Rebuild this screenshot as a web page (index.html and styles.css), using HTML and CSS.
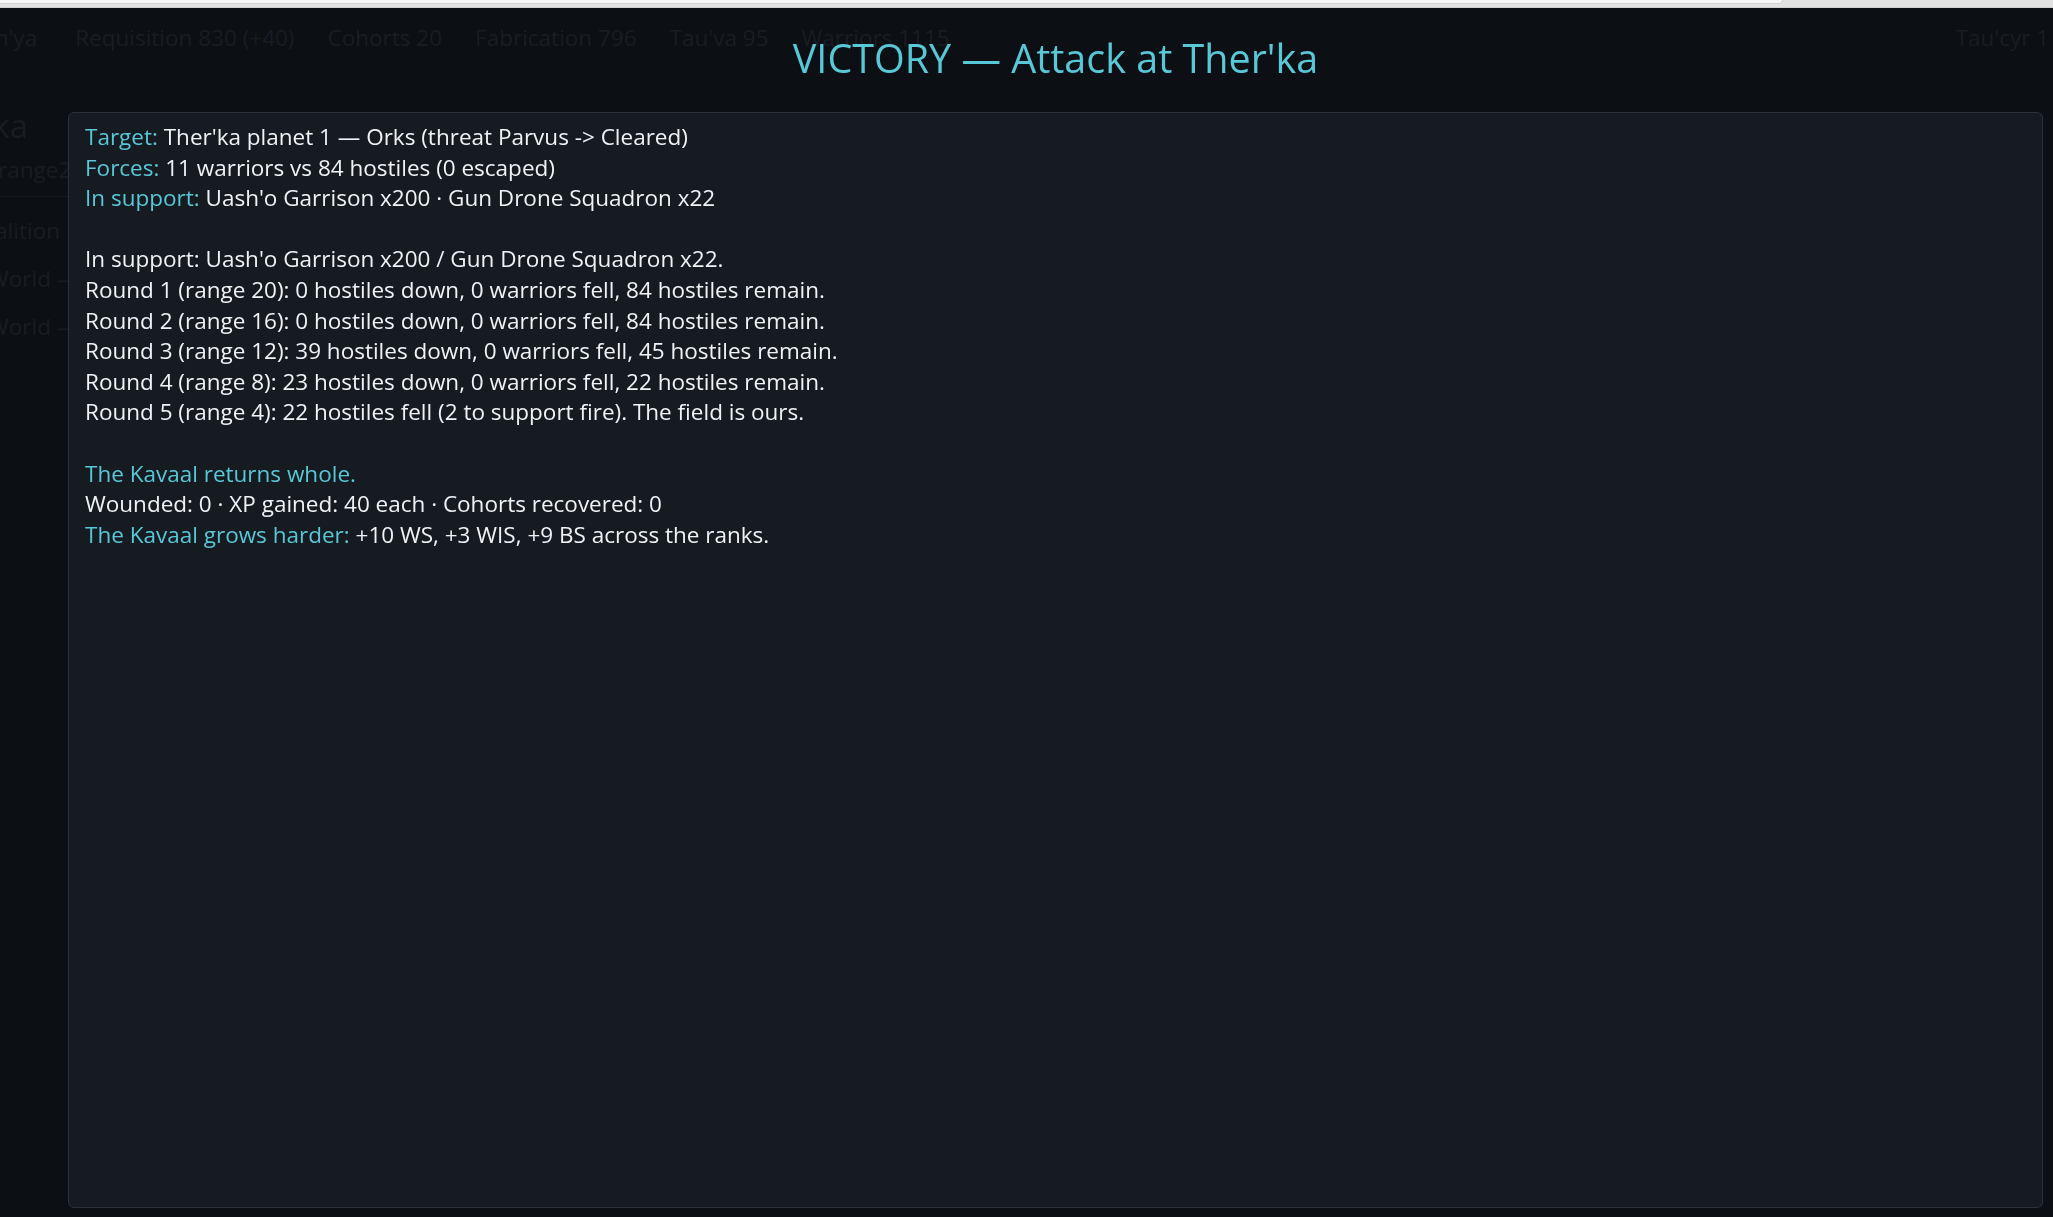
FILE: index.html
```html
<!DOCTYPE html>
<html lang="en">
<head>
<meta charset="utf-8">
<title>VICTORY — Attack at Ther'ka</title>
<link rel="stylesheet" href="styles.css">
</head>
<body>
<div class="scrollbar"><div class="thumb"></div></div>
<div class="page">
  <header class="topbar">
    <div class="stats">
      <span class="stat first">Vash'ya</span>
      <span class="stat">Requisition 830 (+40)</span>
      <span class="stat">Cohorts 20</span>
      <span class="stat">Fabrication 796</span>
      <span class="stat">Tau'va 95</span>
      <span class="stat">Warriors 1115</span>
    </div>
    <span class="stat last">Tau'cyr 1 ·</span>
  </header>
  <aside class="side">
    <div class="side-row side-title"><span>Ther'ka</span></div>
    <div class="side-row side-sub"><span>range20 hostiles</span></div>
    <div class="side-rule"></div>
    <div class="side-row side-co"><span>Tau coalition</span></div>
    <div class="side-row side-world"><span>World — Ther'ka</span></div>
    <div class="side-row side-world"><span>World — Vior'la</span></div>
  </aside>
</div>

<div class="overlay">
  <h1 class="title">VICTORY — Attack at Ther'ka</h1>
  <div class="panel">
    <div class="block">
      <div class="line"><span class="label">Target:</span> Ther'ka planet 1 — Orks (threat Parvus -&gt; Cleared)</div>
      <div class="line"><span class="label">Forces:</span> 11 warriors vs 84 hostiles (0 escaped)</div>
      <div class="line"><span class="label">In support:</span> Uash'o Garrison x200 · Gun Drone Squadron x22</div>
    </div>
    <div class="block">
      <div class="line">In support: Uash'o Garrison x200 / Gun Drone Squadron x22.</div>
      <div class="line">Round 1 (range 20): 0 hostiles down, 0 warriors fell, 84 hostiles remain.</div>
      <div class="line">Round 2 (range 16): 0 hostiles down, 0 warriors fell, 84 hostiles remain.</div>
      <div class="line">Round 3 (range 12): 39 hostiles down, 0 warriors fell, 45 hostiles remain.</div>
      <div class="line">Round 4 (range 8): 23 hostiles down, 0 warriors fell, 22 hostiles remain.</div>
      <div class="line">Round 5 (range 4): 22 hostiles fell (2 to support fire). The field is ours.</div>
    </div>
    <div class="block">
      <div class="line label">The Kavaal returns whole.</div>
      <div class="line">Wounded: 0 · XP gained: 40 each · Cohorts recovered: 0</div>
      <div class="line"><span class="label">The Kavaal grows harder:</span> +10 WS, +3 WIS, +9 BS across the ranks.</div>
    </div>
  </div>
</div>
</body>
</html>
```

FILE: styles.css
```css
html, body {
  margin: 0;
  padding: 0;
  height: 100%;
  overflow: hidden;
}
body {
  background: #0c0f13;
  font-family: "Open Sans", "Noto Sans", sans-serif;
  color: #e8ebee;
}
.scrollbar {
  height: 8px;
  background: #e2e2e2;
  border-bottom: 1px solid #d0d0d0;
  box-sizing: border-box;
}
.thumb {
  width: 1783px;
  height: 4px;
  background: #f6f6f6;
  border-bottom-right-radius: 4px;
  border-bottom: 1px solid #d3d3d3;
  border-right: 1px solid #d3d3d3;
  box-sizing: border-box;
}
.page {
  color: #191d22;
  font-size: 22.5px;
  line-height: 30px;
}
.topbar {
  display: flex;
  justify-content: space-between;
  padding-top: 15px;
  overflow: hidden;
  white-space: nowrap;
}
.stats {
  display: flex;
  gap: 33px;
}
.stat.first {
  margin-left: -42px;
  margin-right: 5px;
}
.stat.last {
  margin-right: -8px;
}
.side {
  padding-top: 52px;
  width: 68px;
  white-space: nowrap;
}
.side-row {
  display: flex;
}
.side-title {
  width: 28px;
  justify-content: flex-end;
  font-size: 33px;
  line-height: 42px;
}
.side-sub {
  margin-left: -2px;
  margin-top: 8px;
}
.side-rule {
  height: 1px;
  background: #161a1f;
  margin: 11px 0 19px;
}
.side-co {
  width: 60px;
  justify-content: flex-end;
}
.side-world {
  margin-left: -12px;
  margin-top: 18px;
}
.overlay {
  position: fixed;
  inset: 0;
  display: flex;
  flex-direction: column;
  padding: 31px 10px 9px 68px;
  box-sizing: border-box;
}
.title {
  margin: 0 0 27px;
  text-align: center;
  font-weight: 400;
  font-size: 39.5px;
  line-height: 54px;
  color: #58c7d6;
}
.panel {
  flex: 1;
  background: #161b22;
  border: 1px solid #2b323a;
  border-radius: 6px;
  padding: 9px 16px;
  font-size: 22.5px;
  line-height: 30.6px;
  color: #f0f2f4;
}
.block + .block {
  margin-top: 30.6px;
}
.label {
  color: #58c7d6;
}
```
